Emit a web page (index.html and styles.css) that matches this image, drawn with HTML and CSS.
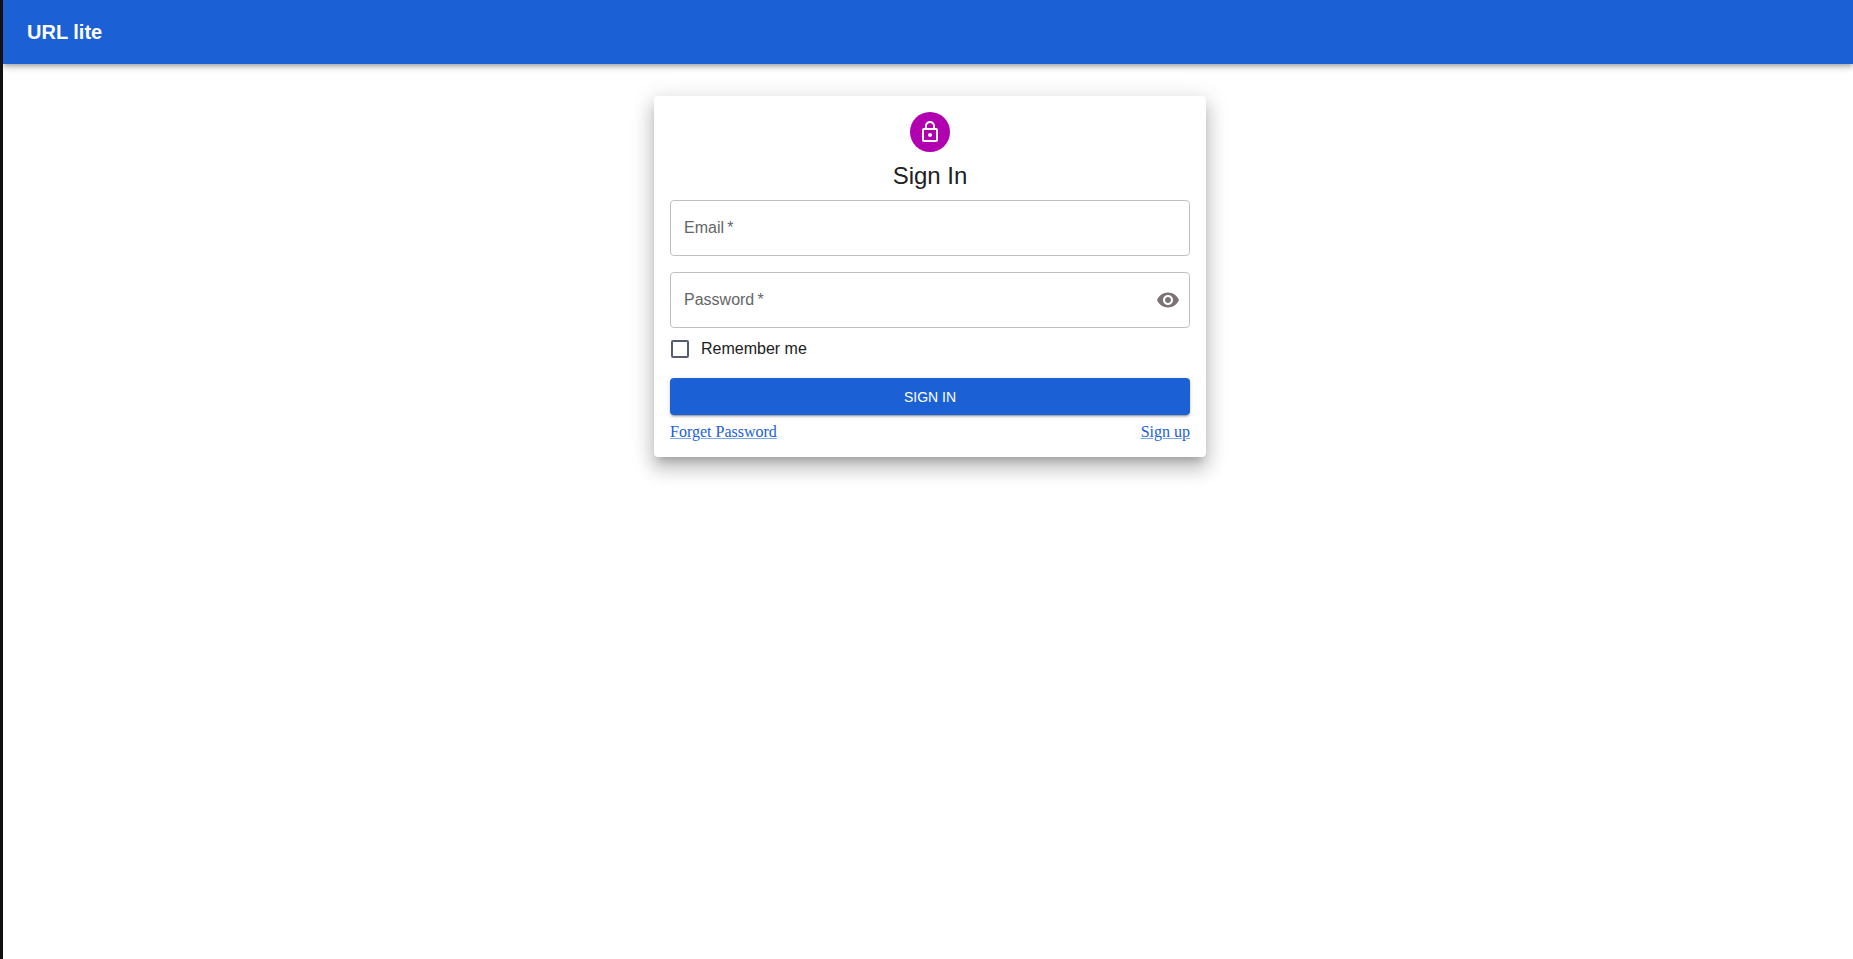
FILE: index.html
```html
<!DOCTYPE html>
<html lang="en">
<head>
<meta charset="UTF-8">
<meta name="viewport" content="width=device-width, initial-scale=1.0">
<title>URL lite</title>
<link rel="stylesheet" href="styles.css">
</head>
<body>
<header class="navbar">
    <h1 class="brand">URL lite</h1>
</header>

<main class="container">
    <form class="card">
        <div class="avatar">
            <svg viewBox="0 0 24 24" width="24" height="24" fill="currentColor" aria-hidden="true">
                <path d="M12 17c1.1 0 2-.9 2-2s-.9-2-2-2-2 .9-2 2 .9 2 2 2zm6-9h-1V6c0-2.76-2.24-5-5-5S7 3.24 7 6v2H6c-1.1 0-2 .9-2 2v10c0 1.1.9 2 2 2h12c1.1 0 2-.9 2-2V10c0-1.1-.9-2-2-2zM8.9 6c0-1.71 1.39-3.1 3.1-3.1s3.1 1.39 3.1 3.1v2H8.9V6zM18 20H6V10h12v10z"/>
            </svg>
        </div>
        <h2 class="title">Sign In</h2>

        <div class="field">
            <input type="email" id="email" name="email" placeholder=" " required>
            <label for="email">Email&thinsp;*</label>
        </div>

        <div class="field">
            <input type="password" id="password" name="password" placeholder=" " required>
            <label for="password">Password&thinsp;*</label>
            <button type="button" class="toggle" aria-label="Show password" onclick="togglePassword()">
                <svg viewBox="0 0 24 24" width="24" height="24" fill="currentColor" aria-hidden="true">
                    <path d="M12 4.5C7 4.5 2.73 7.61 1 12c1.73 4.39 6 7.5 11 7.5s9.27-3.11 11-7.5c-1.73-4.39-6-7.5-11-7.5zM12 17c-2.76 0-5-2.24-5-5s2.24-5 5-5 5 2.24 5 5-2.24 5-5 5zm0-8c-1.66 0-3 1.34-3 3s1.34 3 3 3 3-1.34 3-3-1.34-3-3-3z"/>
                </svg>
            </button>
        </div>

        <label class="remember" for="remember">
            <input type="checkbox" id="remember" name="remember">
            Remember me
        </label>

        <button type="submit" class="submit">Sign in</button>

        <div class="links">
            <a href="#forget">Forget Password</a>
            <a href="#signup">Sign up</a>
        </div>
    </form>
</main>

<script>
function togglePassword() {
    var password = document.getElementById('password');
    password.type = password.type === 'password' ? 'text' : 'password';
}
</script>

</body>
</html>
```

FILE: styles.css
```css
* {
    box-sizing: border-box;
}

body {
    margin: 0;
    min-height: 100vh;
    border-left: 3px solid #111;
    background-color: #fff;
    color: #212121;
    font-family: "Liberation Sans", Arial, sans-serif;
    font-size: 16px;
}

.navbar {
    display: flex;
    align-items: center;
    height: 64px;
    padding: 0 24px;
    background-color: #1b61d5;
    color: #fff;
    box-shadow: 0 2px 4px -1px rgba(0, 0, 0, 0.2),
        0 4px 5px 0 rgba(0, 0, 0, 0.14),
        0 1px 10px 0 rgba(0, 0, 0, 0.12);
}

.brand {
    margin: 0;
    font-size: 20px;
    line-height: 32px;
}

.container {
    padding: 32px 16px 32px 20px;
}

.card {
    display: flex;
    flex-direction: column;
    max-width: 552px;
    margin: 0 auto;
    padding: 16px;
    border-radius: 4px;
    background-color: #fff;
    box-shadow: 0 7px 8px -4px rgba(0, 0, 0, 0.2),
        0 12px 17px 2px rgba(0, 0, 0, 0.14),
        0 5px 22px 4px rgba(0, 0, 0, 0.12);
}

.avatar {
    display: flex;
    align-items: center;
    justify-content: center;
    align-self: center;
    width: 40px;
    height: 40px;
    border-radius: 50%;
    background-color: #b000b0;
    color: #fff;
}

.title {
    margin: 8px 0;
    font-size: 24px;
    font-weight: 400;
    line-height: 32px;
    text-align: center;
}

.field {
    position: relative;
    display: flex;
    align-items: center;
    height: 56px;
    padding-right: 9px;
    border: 1px solid #c0c0c0;
    border-radius: 4px;
}

.field + .field {
    margin-top: 16px;
}

.field:focus-within {
    border-color: #1b61d5;
}

.field input {
    flex: 1;
    min-width: 0;
    height: 100%;
    padding: 0 13px;
    border: none;
    outline: none;
    background: none;
    color: inherit;
    font: inherit;
}

/* label sits over the empty input */
.field label {
    position: absolute;
    left: 13px;
    line-height: 24px;
    color: #666;
    pointer-events: none;
}

.field input:focus + label,
.field input:not(:placeholder-shown) + label {
    top: -12px;
    padding: 0 4px;
    background-color: #fff;
    font-size: 12px;
}

.toggle {
    display: flex;
    padding: 0;
    border: none;
    background: none;
    color: #7d7375;
    cursor: pointer;
}

.remember {
    display: flex;
    align-items: center;
    align-self: flex-start;
    gap: 12px;
    height: 42px;
    cursor: pointer;
}

.remember input {
    appearance: none;
    width: 18px;
    height: 18px;
    margin: 0 0 0 1px;
    border: 2px solid #565d6d;
    border-radius: 2px;
    cursor: pointer;
}

.remember input:checked {
    border-color: #1b61d5;
    background-color: #1b61d5;
}

.submit {
    height: 37px;
    margin: 8px 0;
    border: none;
    border-radius: 4px;
    background-color: #1b61d5;
    color: #fff;
    font-family: inherit;
    font-size: 14px;
    text-transform: uppercase;
    box-shadow: 0 3px 1px -2px rgba(0, 0, 0, 0.2),
        0 2px 2px 0 rgba(0, 0, 0, 0.14),
        0 1px 5px 0 rgba(0, 0, 0, 0.12);
    cursor: pointer;
}

.links {
    display: flex;
    justify-content: space-between;
    font-family: "Liberation Serif", "Times New Roman", serif;
    line-height: 18px;
}

.links a {
    color: #1b61d5;
    text-decoration-color: #7fa8ea;
}
```
